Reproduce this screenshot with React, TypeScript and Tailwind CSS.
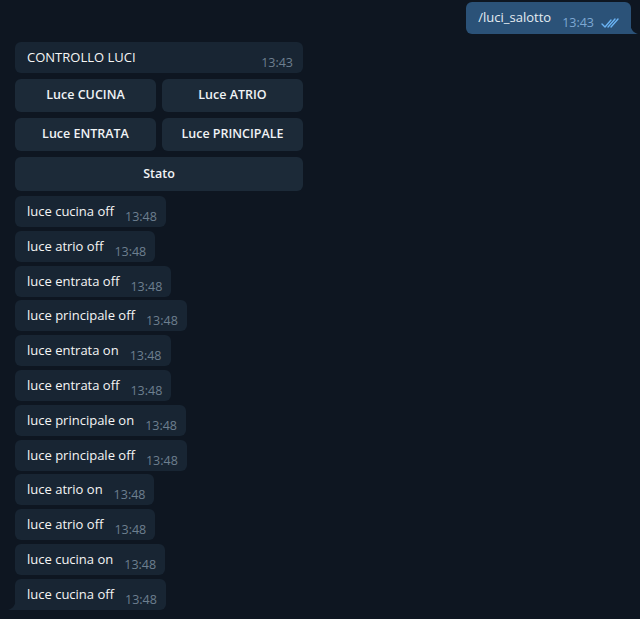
const MESSAGES = [
  "luce cucina off",
  "luce atrio off",
  "luce entrata off",
  "luce principale off",
  "luce entrata on",
  "luce entrata off",
  "luce principale on",
  "luce principale off",
  "luce atrio on",
  "luce atrio off",
  "luce cucina on",
  "luce cucina off",
];

const BUTTONS = ["Luce CUCINA", "Luce ATRIO", "Luce ENTRATA", "Luce PRINCIPALE"];

function Bubble({ text, time, tail }: { text: string; time: string; tail?: boolean }) {
  return (
    <div
      className={`relative flex h-[31px] w-fit items-start rounded-[6px] bg-[#182533] pl-3 pr-[9px] pt-[6px] ${
        tail ? "rounded-bl-none" : ""
      }`}
    >
      <span className="text-[13px] leading-[18px] text-[#f5f5f5]">{text}</span>
      <span className="ml-[11px] mt-[8px] text-[12.5px] leading-[14px] text-[#6d7f8f]">{time}</span>
      {tail && (
        <svg className="absolute -left-[7px] bottom-0" width="8" height="10" viewBox="0 0 8 10">
          <path d="M8 0 V10 H0 C4 9 7 6 8 0 Z" fill="#182533" />
        </svg>
      )}
    </div>
  );
}

export default function App() {
  return (
    <div
      className="h-[619px] w-[640px] overflow-hidden bg-[#0e1621]"
      style={{ fontFamily: '"Open Sans", "Liberation Sans", sans-serif' }}
    >
      {/* outgoing command */}
      <div className="flex justify-end pr-[9px] pt-[2px]">
        <div className="relative flex h-[32px] items-start rounded-[6px] rounded-br-none bg-[#2b5278] pl-3 pr-[12px] pt-[6px]">
          <span className="text-[13px] leading-[18px] text-[#e4ecf2]">/luci_salotto</span>
          <span className="ml-[11px] mt-[8px] text-[12.5px] leading-[14px] text-[#7da8d3]">13:43</span>
          <svg className="ml-[7px] mt-[9px]" width="18" height="12" viewBox="0 0 18 12" fill="none">
            <path d="M1 7 L4 10 L10 3" stroke="#6ab3f3" strokeWidth="1.4" strokeLinecap="round" strokeLinejoin="round" />
            <path d="M7 10 L14 2" stroke="#6ab3f3" strokeWidth="1.4" strokeLinecap="round" />
            <path d="M10 10 L17 2" stroke="#6ab3f3" strokeWidth="1.4" strokeLinecap="round" />
          </svg>
          <svg className="absolute -right-[7px] bottom-0" width="8" height="10" viewBox="0 0 8 10">
            <path d="M0 0 V10 H8 C4 9 1 6 0 0 Z" fill="#2b5278" />
          </svg>
        </div>
      </div>

      <div className="flex flex-col pl-[15px] pt-[8px]">
        {/* bot keyboard message */}
        <div className="flex w-[288px] flex-col">
          <div className="flex h-[31px] items-start justify-between rounded-[6px] bg-[#182533] pl-3 pr-[10px] pt-[6px]">
            <span className="text-[13px] leading-[18px] text-[#f5f5f5]">CONTROLLO LUCI</span>
            <span className="mt-[8px] text-[12.5px] leading-[14px] text-[#6d7f8f]">13:43</span>
          </div>
          <div className="mt-[6px] grid grid-cols-2 gap-[6px]">
            {BUTTONS.map((b) => (
              <button
                key={b}
                type="button"
                className="h-[33px] rounded-[6px] bg-[#1c2a38] text-[12.5px] font-semibold text-[#f0f3f5]"
              >
                {b}
              </button>
            ))}
            <button
              type="button"
              className="col-span-2 h-[34px] rounded-[6px] bg-[#1c2a38] text-[12.5px] font-semibold text-[#f0f3f5]"
            >
              Stato
            </button>
          </div>
        </div>

        {/* status replies */}
        <div className="mt-[5px] flex flex-col gap-[3.8px]">
          {MESSAGES.map((m, i) => (
            <Bubble key={i} text={m} time="13:48" tail={i === MESSAGES.length - 1} />
          ))}
        </div>
      </div>
    </div>
  );
}
